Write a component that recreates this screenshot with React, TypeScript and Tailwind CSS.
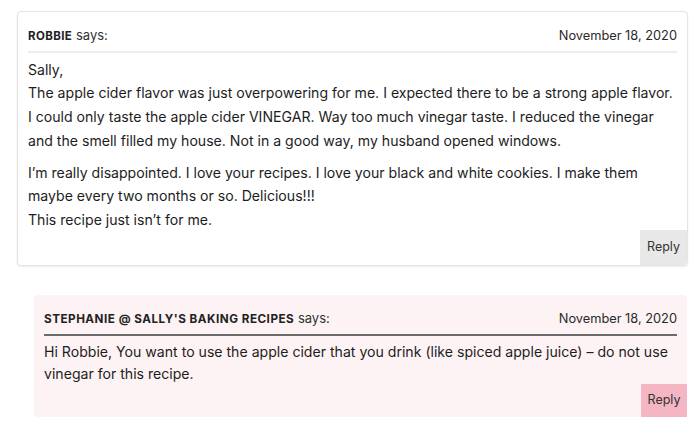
const font = { fontFamily: 'Inter, "Noto Sans", sans-serif' };

type Comment = {
  author: string;
  date: string;
  paragraphs: string[][];
};

const robbie: Comment = {
  author: 'ROBBIE',
  date: 'November 18, 2020',
  paragraphs: [
    [
      'Sally,',
      'The apple cider flavor was just overpowering for me. I expected there to be a strong apple flavor.',
      'I could only taste the apple cider VINEGAR. Way too much vinegar taste. I reduced the vinegar',
      'and the smell filled my house. Not in a good way, my husband opened windows.',
    ],
    [
      'I’m really disappointed. I love your recipes. I love your black and white cookies. I make them',
      'maybe every two months or so. Delicious!!!',
      'This recipe just isn’t for me.',
    ],
  ],
};

export default function App() {
  return (
    <div className="w-[700px] h-[431px] bg-white overflow-hidden text-[#1d1d1d]" style={font}>
      {/* Robbie's comment */}
      <div className="ml-[17px] mt-[11px] w-[671px] rounded border border-[#e4e4e4] shadow-[0_1px_2px_rgba(0,0,0,0.08)] bg-white">
        <div className="px-[10px] pt-[14px]">
          <div className="flex items-center justify-between pb-[5px] border-b-2 border-[#ececec]">
            <div className="text-[13px]">
              <span className="font-bold text-[11.5px] tracking-[0.4px] text-[#222]">{robbie.author}</span>{' '}
              <span className="text-[#333]">says:</span>
            </div>
            <span className="text-[12.8px] text-[#2a2a2a]">{robbie.date}</span>
          </div>
          <div className="pt-[5px] text-[14.1px] leading-[23.75px] whitespace-nowrap">
            {robbie.paragraphs.map((p, i) => (
              <p key={i} className={i > 0 ? 'mt-[8px]' : ''}>
                {p.map((line, j) => (
                  <span key={j} className="block">
                    {line}
                  </span>
                ))}
              </p>
            ))}
          </div>
        </div>
        <div className="flex justify-end -mt-[2px]">
          <button className="h-[35px] w-[47px] bg-[#e8e8e8] text-[12.5px] text-[#333] rounded-br">Reply</button>
        </div>
      </div>

      {/* Stephanie's reply */}
      <div className="ml-[34px] mt-[29px] w-[653px] rounded-sm bg-[#fdf3f4]">
        <div className="px-[10px] pt-[14px]">
          <div className="flex items-center justify-between pb-[6px] border-b-2 border-[#6b6b6b]">
            <div className="text-[13px]">
              <span className="font-bold text-[11.7px] tracking-[0.5px] text-[#222]">
                STEPHANIE @ SALLY'S BAKING RECIPES
              </span>{' '}
              <span className="text-[#333]">says:</span>
            </div>
            <span className="text-[12.8px] text-[#2a2a2a]">November 18, 2020</span>
          </div>
          <p className="pt-[5px] text-[14.1px] leading-[22px] whitespace-nowrap">
            <span className="block">
              Hi Robbie, You want to use the apple cider that you drink (like spiced apple juice) – do not use
            </span>
            <span className="block">vinegar for this recipe.</span>
          </p>
        </div>
        <div className="flex justify-end -mt-[1px]">
          <button className="h-[33px] w-[46px] bg-[#f4b6c2] text-[12.5px] text-[#333]">Reply</button>
        </div>
      </div>
    </div>
  );
}
